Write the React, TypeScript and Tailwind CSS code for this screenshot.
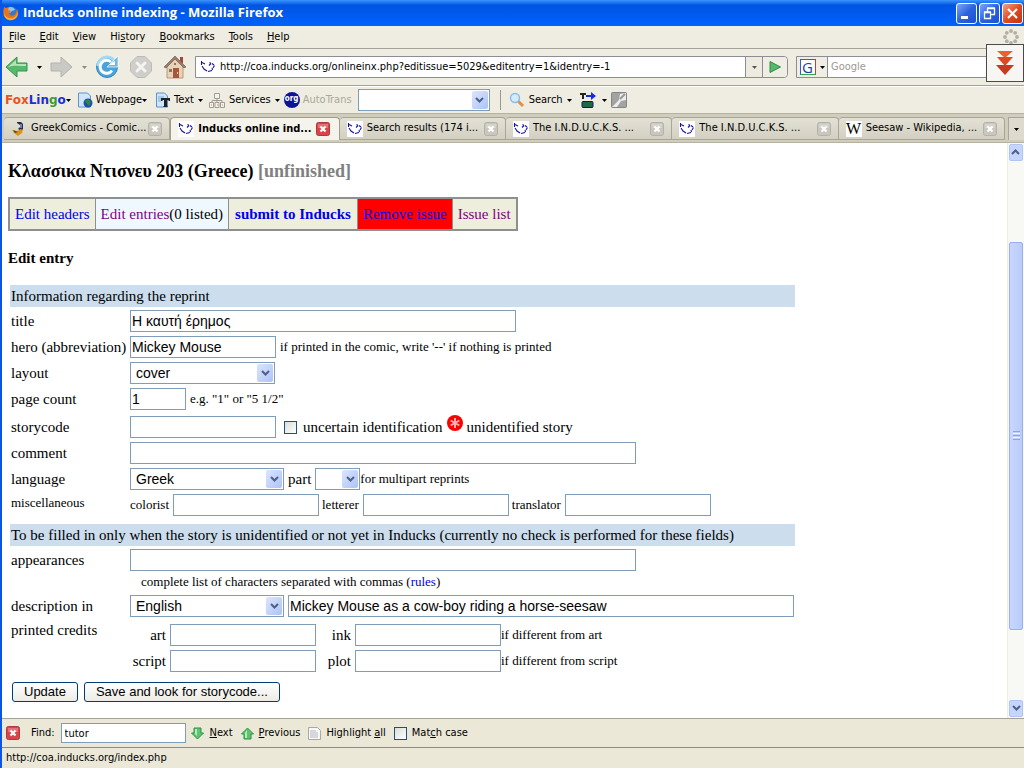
import type { ReactNode } from "react";

const DuckIcon = () => (
  <svg viewBox="0 0 16 16" className="w-4 h-4 shrink-0 bg-white">
    <path
      d="M1.500 2v4M2 7l2 3 3 2M8 12.500l4-1M12.500 11l-.5-2M13 9l1.500-2.500M14 6l-2-1.500M11 4.500L9.500 3.500M2 3.500l3 1.500M9 6.500l2-2"
      fill="none"
      stroke="#1a12a8"
      strokeWidth="1.100"
    />
  </svg>
);

const FirefoxIcon = () => (
  <svg viewBox="0 0 16 16" className="w-4 h-4 shrink-0">
    <circle cx="8" cy="8" r="6.500" fill="#3a76c4" />
    <path d="M5 3c2-2 6-1 7 2l-3 1-2 2-3-2z" fill="#8ec4ee" />
    <path
      d="M1 2l2 1 3-1-1 3 3 1-2 2c0 3 5 4 7 0l1-4c3 5 0 11-6 11.500C2 15-.5 10 .5 5z"
      fill="#e8741a"
    />
    <path d="M1 8c1 4 5 6 9 5 3-1 4-3 4.500-6 1 4-2 8-6.500 8S1 12 1 8z" fill="#f9b233" />
  </svg>
);

const GreekDuckIcon = () => (
  <svg viewBox="0 0 16 16" className="w-4 h-4 shrink-0">
    <path d="M6 1h4l2 2v6h-2V8L9 9 7 8l2-2V4L6 2z" fill="#2b2b45" />
    <path d="M9 3h2v4H9z" fill="#6c7fc8" />
    <path d="M1 9l5 1 2-1 4-1-1 4-4 3-4-3z" fill="#d99416" />
    <path d="M2 9l5 2-3 1z" fill="#5b4420" />
  </svg>
);

const Arrow = ({ gray }: { gray?: boolean }) => (
  <svg viewBox="0 0 5 3" className={gray ? "w-[5px] h-[3px] shrink-0 text-[#888]" : "w-[5px] h-[3px] shrink-0"}>
    <path d="M0 0h5L2.500 3z" fill="currentColor" />
  </svg>
);

const Chevron = () => (
  <svg viewBox="0 0 9 6" className="w-[9px] h-[6px]">
    <path d="M1 1l3.500 3.500L8 1" fill="none" stroke="#4d6185" strokeWidth="2" />
  </svg>
);

const BackIcon = ({ forward }: { forward?: boolean }) => (
  <svg viewBox="0 0 24 24" className="w-6 h-6">
    {forward ? (
      <path d="M1 8h10V2l11 10-11 10v-6H1z" fill="#c9c9c6" stroke="#b2b2b0" />
    ) : (
      <>
        <path d="M22 8H12V2L1 12l11 10v-6h10z" fill="#58b96c" stroke="#35924e" />
        <path d="M21 9H11V5L3 12c5-2 12-1 18-1z" fill="#b4e6b8" />
      </>
    )}
  </svg>
);

const ReloadIcon = () => (
  <svg viewBox="0 0 24 24" className="w-6 h-6">
    <circle cx="12" cy="12" r="10.500" fill="#4ba3dc" stroke="#3486c0" />
    <path d="M3 11a9 9 0 0 1 17-4" fill="none" stroke="#a5d9f5" strokeWidth="3" />
    <path
      d="M17 15.500A6.500 6.500 0 1 1 16 7"
      fill="none"
      stroke="#fff"
      strokeWidth="3"
    />
    <path d="M23 1v11H12z" fill="#6cb8e6" stroke="#fff" strokeWidth=".7" />
    <path d="M18 7l2-1v4h-6z" fill="#fff" />
  </svg>
);

const StopIcon = () => (
  <svg viewBox="0 0 24 24" className="w-6 h-6">
    <path d="M8 1.500h8L22.500 8v8L16 22.500H8L1.500 16V8z" fill="#cfcecb" stroke="#bcbbb8" />
    <path d="M8 8l8 8M16 8l-8 8" stroke="#f4f3f1" strokeWidth="3" strokeLinecap="round" />
  </svg>
);

const HomeIcon = () => (
  <svg viewBox="0 0 24 24" className="w-6 h-6">
    <path d="M17 2h3v7l-3-3z" fill="#a04a3a" />
    <path d="M4 11l8-8 8 8v12H4z" fill="#e9d3b6" stroke="#a98866" strokeWidth=".8" />
    <path d="M12 1L1 12l2 1 9-9 9 9 2-1z" fill="#9b7d6c" stroke="#6c5348" strokeWidth=".6" />
    <path d="M10 13h6v10h-6z" fill="#a7553e" />
    <path d="M6 14h3v3H6zM11 8h2v2h-2z" fill="#8b7767" />
    <path d="M14 17h1v2h-1z" fill="#f4d27a" />
  </svg>
);

const CloseBox = ({ red }: { red?: boolean }) => (
  <svg viewBox="0 0 14 14" className="w-[14px] h-[14px] shrink-0">
    <rect x=".5" y=".5" width="13" height="13" rx="2" fill={red ? "#d9434a" : "#c9c7bd"} stroke={red ? "#b0383c" : "#b4b2a8"} />
    <path d="M2 2h10v4H2z" fill="#fff" opacity=".25" />
    <path d="M4.500 4.500l5 5M9.500 4.500l-5 5" stroke="#fff" strokeWidth="2.200" />
  </svg>
);

const FindArrow = ({ up }: { up?: boolean }) => (
  <svg viewBox="0 0 13 13" className="w-[13px] h-[13px] shrink-0">
    {up ? (
      <path d="M6.500 1l6 6H10v5H3V7H.5z" fill="#5fc46f" stroke="#2f8f4b" />
    ) : (
      <path d="M3 1h7v5h2.500l-6 6-6-6H3z" fill="#5fc46f" stroke="#2f8f4b" />
    )}
    <path d={up ? "M6 3v8H4V6z" : "M4 2h2v7L4 7z"} fill="#b6ecb8" />
  </svg>
);

const menus = [
  ["", "F", "ile"],
  ["", "E", "dit"],
  ["", "V", "iew"],
  ["Hi", "s", "tory"],
  ["", "B", "ookmarks"],
  ["", "T", "ools"],
  ["", "H", "elp"],
];

const tabs: { title: string; icon: ReactNode; active?: boolean }[] = [
  { title: "GreekComics - Comic...", icon: <GreekDuckIcon /> },
  { title: "Inducks online ind...", icon: <DuckIcon />, active: true },
  { title: "Search results (174 i...", icon: <DuckIcon /> },
  { title: "The I.N.D.U.C.K.S. ...", icon: <DuckIcon /> },
  { title: "The I.N.D.U.C.K.S. ...", icon: <DuckIcon /> },
  {
    title: "Seesaw - Wikipedia, ...",
    icon: (
      <span className="w-4 h-4 shrink-0 flex items-center justify-center bg-white font-['Liberation_Serif',serif] text-[16px]">
        W
      </span>
    ),
  },
];

const TitleBar = () => (
  <header className="h-[26px] shrink-0 flex items-center gap-1 pl-px pr-px bg-gradient-to-b from-[#3b94ff] via-[#0054e3] via-20% to-[#0062fb]">
    <FirefoxIcon />
    <h1 className="flex-1 text-white text-[13px] font-bold font-['Open_Sans','Noto_Sans',sans-serif]">
      Inducks online indexing - Mozilla Firefox
    </h1>
    <div className="flex gap-[2px]">
      <button aria-label="Minimize" className="w-[21px] h-[21px] rounded-[3px] border border-white bg-gradient-to-br from-[#7fa6f5] via-[#2c62e0] to-[#1c4fd0]">
        <svg viewBox="0 0 19 19">
          <path d="M4 12h7v3H4z" fill="#fff" />
        </svg>
      </button>
      <button aria-label="Restore" className="w-[21px] h-[21px] rounded-[3px] border border-white bg-gradient-to-br from-[#7fa6f5] via-[#2c62e0] to-[#1c4fd0]">
        <svg viewBox="0 0 19 19">
          <path d="M7.500 8V4.500h7v6H11M4.500 8.500h6v6h-6zM4 8h7M7 4h8" fill="none" stroke="#fff" strokeWidth="1.300" />
        </svg>
      </button>
      <button aria-label="Close" className="w-[21px] h-[21px] rounded-[3px] border border-white bg-gradient-to-br from-[#f0a080] via-[#e04a22] to-[#c03410]">
        <svg viewBox="0 0 19 19">
          <path d="M5 5l9 9M14 5l-9 9" stroke="#fff" strokeWidth="2.200" />
        </svg>
      </button>
    </div>
  </header>
);

const Throbber = () => (
  <svg viewBox="0 0 16 16" className="w-4 h-4" fill="#b1afa6">
    <circle cx="8" cy="2" r="1.900" />
    <circle cx="12.200" cy="3.800" r="1.900" />
    <circle cx="14" cy="8" r="1.900" />
    <circle cx="12.200" cy="12.200" r="1.900" />
    <circle cx="8" cy="14" r="1.900" />
    <circle cx="3.800" cy="12.200" r="1.900" />
    <circle cx="2" cy="8" r="1.900" />
    <circle cx="3.800" cy="3.800" r="1.900" />
  </svg>
);

const MenuBar = () => (
  <nav className="h-[23px] shrink-0 flex items-center pr-[5px] border-b border-[#a5a397]">
    {menus.map(([before, key, after]) => (
      <button key={before + key + after} className="px-[7px]">
        {before}
        <u>{key}</u>
        {after}
      </button>
    ))}
    <span className="ml-auto">
      <Throbber />
    </span>
  </nav>
);

const NavBar = () => (
  <div className="relative h-[37px] shrink-0 flex items-center pl-[3px] pr-[5px] border-b border-[#a5a397]">
    <button aria-label="Back"><BackIcon /></button>
    <span className="w-[21px] flex justify-center"><Arrow /></span>
    <button aria-label="Forward"><BackIcon forward /></button>
    <span className="w-[21px] flex justify-center"><Arrow gray /></span>
    <button aria-label="Reload"><ReloadIcon /></button>
    <button aria-label="Stop" className="ml-[10px]"><StopIcon /></button>
    <button aria-label="Home" className="ml-[10px]"><HomeIcon /></button>
    <div className="ml-2 flex-1 h-[22px] flex items-center border border-[#8d8d95] rounded-r bg-white">
      <span className="px-1"><DuckIcon /></span>
      <input
        aria-label="Location"
        className="flex-1 min-w-0 outline-none"
        defaultValue="http://coa.inducks.org/onlineinx.php?editissue=5029&editentry=1&identry=-1"
      />
      <button aria-label="Show history" className="w-[17px] h-full flex items-center justify-center border-l border-[#8d8d95] bg-[#edebe0] text-[#555]">
        <Arrow />
      </button>
      <button aria-label="Go" className="w-[25px] h-full flex items-center justify-center border-l border-[#8d8d95] bg-[#f0eee4] rounded-r">
        <svg viewBox="0 0 12 12" className="w-3 h-3">
          <path d="M1 .5L11.500 6 1 11.500z" fill="#55b86a" stroke="#2e8a4c" />
        </svg>
      </button>
    </div>
    <div className="ml-2 w-[223px] h-[22px] flex items-center border border-[#8d8d95] rounded-r bg-white">
      <button aria-label="Search engine" className="w-[31px] h-full flex items-center justify-center gap-1 border-r border-[#8d8d95] bg-[#f0eee4]">
        <span className="w-4 h-4 flex items-center justify-center border border-t-[#2c5fd0] border-r-[#d33a2c] border-b-[#2fa84f] border-l-[#2c5fd0] bg-white text-[#1c3fa0] font-['Open_Sans',sans-serif] text-[15px] leading-none">
          G
        </span>
        <Arrow />
      </button>
      <input aria-label="Search" placeholder="Google" className="flex-1 min-w-0 px-[3px] outline-none placeholder:text-[#9c9a92]" />
    </div>
    <button
      aria-label="Downloads"
      className="absolute right-0 -top-[5px] w-[38px] h-[38px] flex items-center justify-center border border-[#4a4a4a] bg-[#f7f6f3]"
    >
      <svg viewBox="0 0 20 26" className="w-5 h-[26px]">
        <path d="M2 1h16l-8 7z" fill="#e8622e" />
        <path d="M2 7h16l-8 9z" fill="#dc4a24" />
        <path d="M1 15h18l-9 10z" fill="#c53a20" />
      </svg>
    </button>
  </div>
);

const FoxBar = () => (
  <div className="h-[27px] shrink-0 flex items-center pl-[3px] border-t border-white">
    <button className="flex items-center font-bold text-[12px] font-['DejaVu_Sans',sans-serif] mr-[6px]">
      <span className="text-[#e8541c]">Fox</span>
      <span className="text-[#1c2fd8]">Lin</span>
      <span className="text-[#3a9e2c]">g</span>
      <span className="text-[#1c2fd8]">o</span>
      <Arrow />
    </button>
    <button className="flex items-center mr-2">
      <svg viewBox="0 0 16 16" className="w-4 h-4 mr-[3px]">
        <path d="M1.500 1h9l3 3v11h-12z" fill="#cfe5fa" stroke="#5d94cf" />
        <circle cx="11" cy="11" r="4.500" fill="#1c4fae" />
        <path d="M8 9l3-2 3 3-2 4-2-2z" fill="#2c8c3c" />
      </svg>
      Webpage
      <Arrow />
    </button>
    <button className="flex items-center mr-[6px]">
      <svg viewBox="0 0 16 16" className="w-4 h-4 mr-[3px]">
        <path d="M1.500 1h8l3 3v11h-11z" fill="#cfe5fa" stroke="#5d94cf" />
        <path d="M3 5h6M3 7h4M3 9h3" stroke="#7fabd8" />
        <path d="M6 6h9v3h-1l-1-1h-1v6l1 1H8l1-1V8H8L7 9H6z" fill="#222" />
      </svg>
      Text
      <span className="ml-1"><Arrow /></span>
    </button>
    <button className="flex items-center mr-1">
      <svg viewBox="0 0 16 16" className="w-4 h-4 mr-1" fill="#f3f2ef" stroke="#a09d94">
        <path d="M8 6v3M3 11V8.500h10V11M8 8v3" fill="none" />
        <path d="M5.500 1.500h5v5h-5z" />
        <path d="M.5 10.500h4v5h-4zM6 10.500h4v5H6zM11.500 10.500h4v5h-4z" />
        <path d="M2 13h1M8 13h1M13 13h1" stroke="#d68b4c" />
      </svg>
      Services
      <span className="ml-1"><Arrow /></span>
    </button>
    <span className="w-4 h-4 mr-[3px] rounded-full bg-[#0c1596] text-white text-[8px] font-bold leading-[14px] text-center">org</span>
    <label htmlFor="autotrans" className="text-[#a9a799] mr-[6px]">AutoTrans</label>
    <Select id="autotrans" width="w-[132px]" options={[""]} />
    <span className="ml-[10px] mr-2 w-px h-5 bg-[#9b998f]" />
    <button className="flex items-center mr-2">
      <svg viewBox="0 0 16 16" className="w-4 h-4 mr-1">
        <path d="M9 9l5 5" stroke="#e0924a" strokeWidth="3" />
        <circle cx="6" cy="6" r="4.500" fill="#d3ebfb" stroke="#8dbbe6" strokeWidth="1.500" />
      </svg>
      Search
      <span className="ml-1"><Arrow /></span>
    </button>
    <button aria-label="Translate" className="flex items-center gap-[6px]">
      <svg viewBox="0 0 16 16" className="w-4 h-4">
        <path d="M0 1h6v2H4v4H2V3H0z" fill="#222" />
        <path d="M6 3h5V0l5 4-5 4V5H6z" fill="#1c28e0" />
        <rect x="2" y="9.500" width="11" height="6" rx="1" fill="#1c6848" stroke="#111c55" />
      </svg>
      <Arrow />
    </button>
    <button aria-label="Options" className="ml-1">
      <svg viewBox="0 0 16 16" className="w-4 h-4">
        <rect x=".5" y=".5" width="15" height="15" rx="1" fill="#a3a3a3" stroke="#858585" />
        <path d="M1 15L8 8l1-6 6-1v7l-5 1-4 6z" fill="#ececec" />
        <path d="M9 7l5-5" stroke="#999" strokeWidth="2" />
      </svg>
    </button>
  </div>
);

const TabBar = () => (
  <div role="tablist" className="h-[30px] shrink-0 flex items-end pl-[2px] pb-[2px] pt-[3px] border-t border-b border-[#b5b2a2] bg-[#d0cdbd]">
    {tabs.map((tab, i) => (
      <div
        key={i}
        className={
          tab.active
            ? "flex-1 min-w-0 h-full flex items-center pl-[7px] pr-[9px] border border-b-0 border-[#a09d8f] rounded-t bg-[#f4f3ec] font-bold"
            : "flex-1 min-w-0 h-full flex items-center pl-[7px] pr-[7px] border-t border-r border-b border-[#a9a698] rounded-t bg-gradient-to-b from-[#e3e1d5] to-[#d3d0c2]"
        }
      >
        <button role="tab" aria-selected={!!tab.active} className="flex-1 min-w-0 flex items-center gap-1 whitespace-nowrap">
          {tab.icon}
          {tab.title}
        </button>
        <button aria-label="Close tab"><CloseBox red={tab.active} /></button>
      </div>
    ))}
    <button aria-label="List all tabs" className="ml-[3px] w-4 h-full flex items-center justify-center border-l border-t border-[#a9a698] bg-[#dedbce]">
      <Arrow />
    </button>
  </div>
);

const Select = ({ id, width, options, label }: { id: string; width: string; options: string[]; label?: string }) => (
  <span className={`relative inline-flex h-[22px] shrink-0 ${width}`}>
    <select id={id} aria-label={label} className="w-full h-full pl-[5px] appearance-none border border-[#7f9db9] bg-white outline-none">
      {options.map((option) => (
        <option key={option}>{option}</option>
      ))}
    </select>
    <span className="absolute right-[2px] top-[2px] bottom-[2px] w-4 flex items-center justify-center rounded-[2px] bg-gradient-to-br from-[#dbe5fd] to-[#adc3f7] pointer-events-none">
      <Chevron />
    </span>
  </span>
);

const Field = ({ id, width, value, label }: { id: string; width: string; value?: string; label?: string }) => (
  <input
    id={id}
    aria-label={label}
    defaultValue={value}
    className={`h-[22px] pl-px pr-[2px] border border-[#7f9db9] bg-white outline-none font-['Liberation_Sans',sans-serif] text-[14px] ${width}`}
  />
);

const Row = ({ id, label, children }: { id: string; label: string; children: ReactNode }) => (
  <div className="h-[26px] flex items-center">
    <label htmlFor={id} className="w-[120px] shrink-0 pl-px whitespace-nowrap">
      {label}
    </label>
    {children}
  </div>
);

const Band = ({ children }: { children: ReactNode }) => (
  <h3 className="h-[22px] flex items-center pl-px bg-[#ccdded]">{children}</h3>
);

const EntryForm = () => (
  <form className="ml-[2px] max-w-[785px] font-['Liberation_Serif',serif] text-[15px] [&_select]:font-['Liberation_Sans',sans-serif] [&_select]:text-[14px]">
    <Band>Information regarding the reprint</Band>
    <div className="pt-px pb-[6px]">
      <Row id="title" label="title">
        <Field id="title" width="w-[386px]" value="Η καυτή έρημος" />
      </Row>
      <Row id="hero" label="hero (abbreviation)">
        <Field id="hero" width="w-[146px]" value="Mickey Mouse" />
        <span className="ml-1 text-[13px]">if printed in the comic, write '--' if nothing is printed</span>
      </Row>
      <Row id="layout" label="layout">
        <Select id="layout" width="w-[145px]" options={["cover"]} />
      </Row>
      <Row id="pages" label="page count">
        <Field id="pages" width="w-[56px]" value="1" />
        <span className="ml-1 text-[13px]">e.g. "1" or "5 1/2"</span>
      </Row>
      <div className="pt-[2px]">
        <Row id="storycode" label="storycode">
          <Field id="storycode" width="w-[146px]" />
          <input
            id="uncertain"
            type="checkbox"
            className="ml-2 mr-[6px] w-[13px] h-[13px] appearance-none border border-[#1c5180] bg-gradient-to-br from-[#dcdcd7] to-white"
          />
          <label htmlFor="uncertain">uncertain identification</label>
          <svg viewBox="0 0 16 16" className="w-4 h-4 mx-1 mb-2">
            <circle cx="8" cy="8" r="8" fill="#f00" />
            <path d="M8 3v10M3.700 5.500l8.600 5M12.300 5.500l-8.600 5" stroke="#ffb0b0" strokeWidth="2" />
          </svg>
          unidentified story
        </Row>
      </div>
      <Row id="comment" label="comment">
        <Field id="comment" width="w-[506px]" />
      </Row>
      <Row id="language" label="language">
        <Select id="language" width="w-[154px]" options={["Greek"]} />
        <label htmlFor="part" className="mx-1">part</label>
        <Select id="part" width="w-[45px]" options={[""]} />
        <span className="text-[13px]">for multipart reprints</span>
      </Row>
      <div className="h-[26px] flex items-center text-[13px]">
        <span className="w-[120px] pl-px pb-1">miscellaneous</span>
        <label htmlFor="colorist" className="mr-1">colorist</label>
        <Field id="colorist" width="w-[146px]" />
        <label htmlFor="letterer" className="ml-[3px] mr-1">letterer</label>
        <Field id="letterer" width="w-[146px]" />
        <label htmlFor="translator" className="ml-[3px] mr-1">translator</label>
        <Field id="translator" width="w-[146px]" />
      </div>
    </div>
    <Band>To be filled in only when the story is unidentified or not yet in Inducks (currently no check is performed for these fields)</Band>
    <div className="pt-px">
      <Row id="appearances" label="appearances">
        <Field id="appearances" width="w-[506px]" />
      </Row>
      <p className="h-5 pl-[131px] text-[13px] leading-[18px]">
        complete list of characters separated with commas (<a href="#rules" className="text-[#0000ee]">rules</a>)
      </p>
      <Row id="description-language" label="description in">
        <Select id="description-language" width="w-[154px]" options={["English"]} />
        <span className="w-1" />
        <Field id="description" label="description" width="w-[506px]" value="Mickey Mouse as a cow-boy riding a horse-seesaw" />
      </Row>
      <div className="flex">
        <span className="w-[120px] pl-px">printed credits</span>
        <div className="pt-[3px] grid grid-cols-[36px_146px_31px_146px_auto] items-center gap-x-1 auto-rows-[26px]">
          <label htmlFor="art" className="text-right">art</label>
          <Field id="art" width="w-[146px]" />
          <label htmlFor="ink" className="text-right">ink</label>
          <Field id="ink" width="w-[146px]" />
          <span className="-ml-1 text-[13px]">if different from art</span>
          <label htmlFor="script" className="text-right">script</label>
          <Field id="script" width="w-[146px]" />
          <label htmlFor="plot" className="text-right">plot</label>
          <Field id="plot" width="w-[146px]" />
          <span className="-ml-1 text-[13px]">if different from script</span>
        </div>
      </div>
    </div>
    <div className="flex gap-[6px] mt-2 ml-[2px] font-['Liberation_Sans',sans-serif] text-[13px]">
      <button type="button" className="h-5 px-[11px] flex items-center border border-[#003c74] rounded-[3px] bg-gradient-to-b from-white to-[#ecebe5]">
        Update
      </button>
      <button type="button" className="h-5 px-[11px] flex items-center border border-[#003c74] rounded-[3px] bg-gradient-to-b from-white to-[#ecebe5]">
        Save and look for storycode...
      </button>
    </div>
  </form>
);

const IssueTabs = () => (
  <table className="mt-[14px] border-2 border-[#8f8f8f] border-collapse text-[15px]">
    <tbody>
      <tr className="h-[32px] bg-[#eeeedd] text-[#0000ee]">
        <td className="px-[5px] border border-[#8f8f8f]"><a href="#headers">Edit headers</a></td>
        <td className="px-[5px] border border-[#8f8f8f] bg-[#f0f8ff] text-black">
          <a href="#entries" className="text-[#800080]">Edit entries</a>(0 listed)
        </td>
        <td className="px-[6px] border border-[#8f8f8f] font-bold"><a href="#submit">submit to Inducks</a></td>
        <td className="px-[5px] border border-[#8f8f8f] bg-[#ff0000]"><a href="#remove">Remove issue</a></td>
        <td className="px-[5px] border border-[#8f8f8f]"><a href="#issues" className="text-[#800080]">Issue list</a></td>
      </tr>
    </tbody>
  </table>
);

const ScrollBar = () => (
  <div className="w-[17px] shrink-0 flex flex-col border-l border-[#eeede5] bg-[#f8f8f4]">
    <button aria-label="Scroll up" className="h-[17px] m-px flex items-center justify-center rounded-[2px] bg-[#c5d5fd] border border-[#b0c4f5] rotate-180">
      <Chevron />
    </button>
    <div className="flex-[80] shrink-0" />
    <div className="flex-[389] mx-px flex flex-col items-center justify-center gap-px rounded-[2px] border border-[#98b0ef] bg-gradient-to-r from-[#c9d7fd] to-[#b9cbfa]">
      <span className="w-[7px] h-px bg-[#8ca4e0]" />
      <span className="w-[7px] h-px bg-[#eef3ff]" />
      <span className="w-[7px] h-px bg-[#8ca4e0]" />
      <span className="w-[7px] h-px bg-[#eef3ff]" />
      <span className="w-[7px] h-px bg-[#8ca4e0]" />
    </div>
    <div className="flex-[69] shrink-0" />
    <button aria-label="Scroll down" className="h-[17px] m-px flex items-center justify-center rounded-[2px] bg-[#c5d5fd] border border-[#b0c4f5]">
      <Chevron />
    </button>
  </div>
);

const FindBar = () => (
  <div className="h-[29px] shrink-0 flex items-center pl-1 border-t border-[#a5a397] bg-[#ebe8d8]">
    <button aria-label="Close find bar"><CloseBox red /></button>
    <label htmlFor="find" className="ml-[11px] mr-[6px]">Find:</label>
    <input id="find" defaultValue="tutor" className="w-[125px] h-5 px-[3px] border border-[#7f9db9] bg-white outline-none" />
    <button className="ml-[5px] flex items-center gap-[6px]">
      <FindArrow />
      <span><u>N</u>ext</span>
    </button>
    <button className="ml-2 flex items-center gap-[5px]">
      <FindArrow up />
      <span><u>P</u>revious</span>
    </button>
    <button className="ml-2 flex items-center gap-[5px]">
      <svg viewBox="0 0 13 13" className="w-[13px] h-[13px]">
        <path d="M.5.5h9l3 3v9H.5z" fill="#f7f7f5" stroke="#aaa9a4" />
        <path d="M2 4h6M2 6h8M2 8h8M2 10h8" stroke="#b4b8c2" />
      </svg>
      <span>Highlight <u>a</u>ll</span>
    </button>
    <input
      id="match-case"
      type="checkbox"
      className="ml-2 mr-[5px] w-[13px] h-[13px] appearance-none border border-[#1c5180] bg-gradient-to-br from-[#dcdcd7] to-white"
    />
    <label htmlFor="match-case">Mat<u>c</u>h case</label>
  </div>
);

export default function App() {
  return (
    <div className="h-screen flex flex-col overflow-hidden border-l-2 border-[#0a55e2] bg-[#efede1] text-black text-[11px] font-['DejaVu_Sans_Condensed','DejaVu_Sans',sans-serif]">
      <TitleBar />
      <MenuBar />
      <NavBar />
      <FoxBar />
      <TabBar />
      <div className="flex-1 min-h-0 flex bg-white">
        <main className="flex-1 min-w-0 overflow-hidden px-[6px] pt-4 font-['Liberation_Serif',serif]">
          <h2 className="text-[18px] leading-6 font-bold">
            Κλασσικα Ντισνευ 203 (Greece) <span className="text-[#808080]">[unfinished]</span>
          </h2>
          <IssueTabs />
          <h3 className="mt-4 mb-4 text-[15px] leading-[22px] font-bold">Edit entry</h3>
          <EntryForm />
        </main>
        <ScrollBar />
      </div>
      <FindBar />
      <footer className="h-[21px] shrink-0 flex items-center pl-1 border-t border-[#8f8d80] bg-[#ebe8d8]">
        http://coa.inducks.org/index.php
      </footer>
    </div>
  );
}
